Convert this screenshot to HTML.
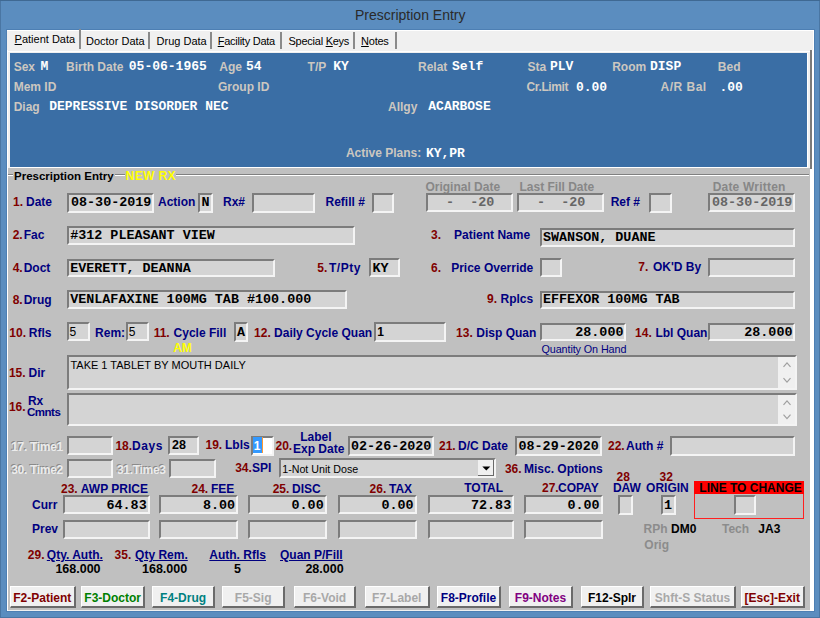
<!DOCTYPE html>
<html><head><meta charset="utf-8">
<style>
*{margin:0;padding:0;box-sizing:border-box}
html,body{width:820px;height:618px;overflow:hidden;background:#5b8dbf;font-family:"Liberation Sans",sans-serif}
.t{position:absolute;white-space:nowrap}
.bx{position:absolute;border-top:2px solid #7c7c7c;border-left:2px solid #7c7c7c;border-bottom:2px solid #f4f4f4;border-right:2px solid #f4f4f4}
.btn{position:absolute;top:586px;height:22px;padding-top:2px;background:#f0f0f0;border-top:1px solid #fff;border-left:1px solid #fff;border-right:2px solid #6a6a6a;border-bottom:2px solid #6a6a6a;font-weight:bold;font-size:12px;text-align:center;line-height:19px;white-space:nowrap}
.f{position:absolute}
</style></head><body>

<div class="f" style="left:0;top:0;width:820px;height:618px;background:#5b8dbf;border:1px solid #4a76a3"></div>
<div class="f" style="left:0;top:0;width:820px;height:1px;background:#3f6993"></div>
<div class="t" style="left:355px;top:6.15px;font-size:14px;line-height:18px;font-weight:normal;color:#2a2a2a;font-family:'Liberation Sans',sans-serif;">Prescription Entry</div>
<div class="f" style="left:6px;top:29px;width:809px;height:583px;background:#4d7fb3"></div>
<div class="f" style="left:7px;top:30px;width:807px;height:581px;background:#f0f0f0;border-top:1px solid #fff;border-right:1px solid #fff"></div>
<div class="f" style="left:810px;top:50px;width:4px;height:561px;background:#fff"></div>
<div class="f" style="left:7px;top:51px;width:803px;height:1px;background:#fff"></div>
<div class="f" style="left:7px;top:50px;width:1px;height:561px;background:#fff"></div>
<div class="f" style="left:810px;top:50px;width:1.5px;height:119px;background:#7a7a7a"></div>
<div class="t" style="left:14.6px;top:32.19px;font-size:11px;line-height:14px;font-weight:normal;color:#000;font-family:'Liberation Sans',sans-serif;"><u>P</u>atient Data</div>
<div class="f" style="left:79.0px;top:29px;width:2px;height:20px;background:#8a8a8a"></div>
<div class="t" style="left:86px;top:33.69px;font-size:11px;line-height:14px;font-weight:normal;color:#000;font-family:'Liberation Sans',sans-serif;">Doctor Data</div>
<div class="f" style="left:148.0px;top:32px;width:2px;height:17px;background:#8a8a8a"></div>
<div class="t" style="left:156.6px;top:33.69px;font-size:11px;line-height:14px;font-weight:normal;color:#000;font-family:'Liberation Sans',sans-serif;">Drug Data</div>
<div class="f" style="left:209.6px;top:32px;width:2px;height:17px;background:#8a8a8a"></div>
<div class="t" style="left:217.7px;top:33.69px;font-size:11px;line-height:14px;font-weight:normal;color:#000;font-family:'Liberation Sans',sans-serif;letter-spacing:-0.25px"><u>F</u>acility Data</div>
<div class="f" style="left:280.0px;top:32px;width:2px;height:17px;background:#8a8a8a"></div>
<div class="t" style="left:288.5px;top:33.69px;font-size:11px;line-height:14px;font-weight:normal;color:#000;font-family:'Liberation Sans',sans-serif;letter-spacing:-0.25px">Special <u>K</u>eys</div>
<div class="f" style="left:353.3px;top:32px;width:2px;height:17px;background:#8a8a8a"></div>
<div class="t" style="left:361.1px;top:33.69px;font-size:11px;line-height:14px;font-weight:normal;color:#000;font-family:'Liberation Sans',sans-serif;letter-spacing:-0.25px"><u>N</u>otes</div>
<div class="f" style="left:395.4px;top:32px;width:2px;height:17px;background:#8a8a8a"></div>
<div class="f" style="left:10px;top:53px;width:798px;height:115px;background:#fff"></div>
<div class="f" style="left:10px;top:53px;width:797px;height:113.5px;background:#3a6ea5"></div>
<div class="t" style="left:13.7px;top:58.84px;font-size:12px;line-height:16px;font-weight:bold;color:#ccc7c0;font-family:'Liberation Sans',sans-serif;">Sex</div>
<div class="t" style="left:40.5px;top:58.44px;font-size:13px;line-height:17px;font-weight:bold;color:#fff;font-family:'Liberation Mono',monospace;white-space:pre;">M</div>
<div class="t" style="left:66px;top:58.84px;font-size:12px;line-height:16px;font-weight:bold;color:#ccc7c0;font-family:'Liberation Sans',sans-serif;">Birth Date</div>
<div class="t" style="left:128.8px;top:58.44px;font-size:13px;line-height:17px;font-weight:bold;color:#fff;font-family:'Liberation Mono',monospace;white-space:pre;">05-06-1965</div>
<div class="t" style="left:219.3px;top:58.84px;font-size:12px;line-height:16px;font-weight:bold;color:#ccc7c0;font-family:'Liberation Sans',sans-serif;">Age</div>
<div class="t" style="left:246px;top:58.44px;font-size:13px;line-height:17px;font-weight:bold;color:#fff;font-family:'Liberation Mono',monospace;white-space:pre;">54</div>
<div class="t" style="left:307.6px;top:58.84px;font-size:12px;line-height:16px;font-weight:bold;color:#ccc7c0;font-family:'Liberation Sans',sans-serif;">T/P</div>
<div class="t" style="left:333.2px;top:58.44px;font-size:13px;line-height:17px;font-weight:bold;color:#fff;font-family:'Liberation Mono',monospace;white-space:pre;">KY</div>
<div class="t" style="left:418px;top:58.84px;font-size:12px;line-height:16px;font-weight:bold;color:#ccc7c0;font-family:'Liberation Sans',sans-serif;">Relat</div>
<div class="t" style="left:452px;top:58.44px;font-size:13px;line-height:17px;font-weight:bold;color:#fff;font-family:'Liberation Mono',monospace;white-space:pre;">Self</div>
<div class="t" style="left:527.6px;top:58.84px;font-size:12px;line-height:16px;font-weight:bold;color:#ccc7c0;font-family:'Liberation Sans',sans-serif;">Sta</div>
<div class="t" style="left:550px;top:58.44px;font-size:13px;line-height:17px;font-weight:bold;color:#fff;font-family:'Liberation Mono',monospace;white-space:pre;">PLV</div>
<div class="t" style="left:612.2px;top:58.84px;font-size:12px;line-height:16px;font-weight:bold;color:#ccc7c0;font-family:'Liberation Sans',sans-serif;">Room</div>
<div class="t" style="left:650px;top:58.44px;font-size:13px;line-height:17px;font-weight:bold;color:#fff;font-family:'Liberation Mono',monospace;white-space:pre;">DISP</div>
<div class="t" style="left:717.8px;top:58.84px;font-size:12px;line-height:16px;font-weight:bold;color:#ccc7c0;font-family:'Liberation Sans',sans-serif;">Bed</div>
<div class="t" style="left:13.7px;top:79.44px;font-size:12px;line-height:16px;font-weight:bold;color:#ccc7c0;font-family:'Liberation Sans',sans-serif;">Mem ID</div>
<div class="t" style="left:218px;top:79.44px;font-size:12px;line-height:16px;font-weight:bold;color:#ccc7c0;font-family:'Liberation Sans',sans-serif;">Group ID</div>
<div class="t" style="left:526.6px;top:79.44px;font-size:12px;line-height:16px;font-weight:bold;color:#ccc7c0;font-family:'Liberation Sans',sans-serif;letter-spacing:-0.4px">Cr.Limit</div>
<div class="t" style="left:575.9px;top:79.04px;font-size:13px;line-height:17px;font-weight:bold;color:#fff;font-family:'Liberation Mono',monospace;white-space:pre;">0.00</div>
<div class="t" style="left:660.5px;top:79.44px;font-size:12px;line-height:16px;font-weight:bold;color:#ccc7c0;font-family:'Liberation Sans',sans-serif;letter-spacing:0.5px">A/R Bal</div>
<div class="t" style="left:719.5px;top:79.04px;font-size:13px;line-height:17px;font-weight:bold;color:#fff;font-family:'Liberation Mono',monospace;white-space:pre;">.00</div>
<div class="t" style="left:13.7px;top:98.84px;font-size:12px;line-height:16px;font-weight:bold;color:#ccc7c0;font-family:'Liberation Sans',sans-serif;">Diag</div>
<div class="t" style="left:49.2px;top:98.44px;font-size:13px;line-height:17px;font-weight:bold;color:#fff;font-family:'Liberation Mono',monospace;white-space:pre;">DEPRESSIVE DISORDER NEC</div>
<div class="t" style="left:388px;top:98.84px;font-size:12px;line-height:16px;font-weight:bold;color:#ccc7c0;font-family:'Liberation Sans',sans-serif;">Allgy</div>
<div class="t" style="left:428.3px;top:98.44px;font-size:13px;line-height:17px;font-weight:bold;color:#fff;font-family:'Liberation Mono',monospace;white-space:pre;">ACARBOSE</div>
<div class="t" style="left:345.9px;top:145.24px;font-size:12px;line-height:16px;font-weight:bold;color:#ccc7c0;font-family:'Liberation Sans',sans-serif;">Active Plans:</div>
<div class="t" style="left:425.9px;top:144.84px;font-size:13px;line-height:17px;font-weight:bold;color:#fff;font-family:'Liberation Mono',monospace;white-space:pre;">KY,PR</div>
<div class="f" style="left:8px;top:168px;width:802px;height:442px;background:#c0c0c0"></div>
<div class="f" style="left:8px;top:174px;width:801px;height:1px;background:#808080"></div>
<div class="f" style="left:8px;top:175px;width:801px;height:1.2px;background:#fff"></div>
<div class="f" style="left:12.5px;top:169px;width:102.5px;height:12px;background:#c0c0c0"></div>
<div class="f" style="left:125px;top:169px;width:51px;height:12px;background:#c0c0c0"></div>
<div class="t" style="left:14px;top:168.51px;font-size:11.5px;line-height:15px;font-weight:bold;color:#000;font-family:'Liberation Sans',sans-serif;">Prescription Entry</div>
<div class="t" style="left:125.6px;top:167.64px;font-size:12px;line-height:16px;font-weight:bold;color:#ffff00;font-family:'Liberation Sans',sans-serif;letter-spacing:0.4px">NEW RX</div>
<div class="t" style="left:13px;top:194.34px;font-size:12px;line-height:16px;font-weight:bold;color:#800000;font-family:'Liberation Sans',sans-serif;">1.</div>
<div class="t" style="left:26px;top:194.34px;font-size:12px;line-height:16px;font-weight:bold;color:#000080;font-family:'Liberation Sans',sans-serif;">Date</div>
<div class="bx" style="left:67px;top:193px;width:87px;height:19.5px;background:#d4d4d4;"></div>
<div class="t" style="left:71px;top:194.43px;font-size:13.4px;line-height:17px;font-weight:bold;color:#000;font-family:'Liberation Mono',monospace;white-space:pre;">08-30-2019</div>
<div class="t" style="left:158px;top:194.34px;font-size:12px;line-height:16px;font-weight:bold;color:#000080;font-family:'Liberation Sans',sans-serif;">Action</div>
<div class="bx" style="left:198px;top:193px;width:14.5px;height:19.5px;background:#d4d4d4;"></div>
<div class="t" style="left:201.5px;top:194.43px;font-size:13.4px;line-height:17px;font-weight:bold;color:#000;font-family:'Liberation Mono',monospace;white-space:pre;">N</div>
<div class="t" style="left:223px;top:194.34px;font-size:12px;line-height:16px;font-weight:bold;color:#000080;font-family:'Liberation Sans',sans-serif;">Rx#</div>
<div class="bx" style="left:251.6px;top:193px;width:63.400000000000006px;height:19.5px;background:#d4d4d4;"></div>
<div class="t" style="left:325.5px;top:194.34px;font-size:12px;line-height:16px;font-weight:bold;color:#000080;font-family:'Liberation Sans',sans-serif;">Refill #</div>
<div class="bx" style="left:371.6px;top:193px;width:22.399999999999977px;height:19.5px;background:#d4d4d4;"></div>
<div class="t" style="left:425.4px;top:179.34px;font-size:12px;line-height:16px;font-weight:bold;color:#878787;font-family:'Liberation Sans',sans-serif;">Original Date</div>
<div class="bx" style="left:426px;top:193px;width:87.39999999999998px;height:19px;background:#d4d4d4;"></div>
<div class="t" style="left:430px;top:194.43px;font-size:13.4px;line-height:17px;font-weight:bold;color:#666;font-family:'Liberation Mono',monospace;white-space:pre;">  -  -20</div>
<div class="t" style="left:519.5px;top:179.34px;font-size:12px;line-height:16px;font-weight:bold;color:#878787;font-family:'Liberation Sans',sans-serif;">Last Fill Date</div>
<div class="bx" style="left:517px;top:193px;width:87px;height:19px;background:#d4d4d4;"></div>
<div class="t" style="left:521px;top:194.43px;font-size:13.4px;line-height:17px;font-weight:bold;color:#666;font-family:'Liberation Mono',monospace;white-space:pre;">  -  -20</div>
<div class="t" style="left:610.7px;top:194.34px;font-size:12px;line-height:16px;font-weight:bold;color:#000080;font-family:'Liberation Sans',sans-serif;">Ref #</div>
<div class="bx" style="left:648.8px;top:193px;width:23.200000000000045px;height:19.5px;background:#d4d4d4;"></div>
<div class="t" style="left:712.7px;top:179.14px;font-size:12px;line-height:16px;font-weight:bold;color:#878787;font-family:'Liberation Sans',sans-serif;letter-spacing:0.2px">Date Written</div>
<div class="bx" style="left:708px;top:193px;width:87.29999999999995px;height:19px;background:#d4d4d4;"></div>
<div class="t" style="left:712px;top:194.43px;font-size:13.4px;line-height:17px;font-weight:bold;color:#666;font-family:'Liberation Mono',monospace;white-space:pre;">08-30-2019</div>
<div class="t" style="left:12.7px;top:226.84px;font-size:12px;line-height:16px;font-weight:bold;color:#000080;font-family:'Liberation Sans',sans-serif;"><span style="color:#800000">2.</span><span style="margin-left:1px">Fac</span></div>
<div class="bx" style="left:66.5px;top:226px;width:288.5px;height:18.5px;background:#d4d4d4;"></div>
<div class="t" style="left:70.2px;top:226.93px;font-size:13.4px;line-height:17px;font-weight:bold;color:#000;font-family:'Liberation Mono',monospace;white-space:pre;">#312 PLEASANT VIEW</div>
<div class="t" style="left:431px;top:226.84px;font-size:12px;line-height:16px;font-weight:bold;color:#800000;font-family:'Liberation Sans',sans-serif;">3.</div>
<div class="t" style="left:454.1px;top:226.84px;font-size:12px;line-height:16px;font-weight:bold;color:#000080;font-family:'Liberation Sans',sans-serif;">Patient Name</div>
<div class="bx" style="left:539.5px;top:228.4px;width:255.70000000000005px;height:18.299999999999983px;background:#d4d4d4;"></div>
<div class="t" style="left:543px;top:229.43px;font-size:13.4px;line-height:17px;font-weight:bold;color:#000;font-family:'Liberation Mono',monospace;white-space:pre;">SWANSON, DUANE</div>
<div class="t" style="left:12.7px;top:259.54px;font-size:12px;line-height:16px;font-weight:bold;color:#000080;font-family:'Liberation Sans',sans-serif;"><span style="color:#800000">4.</span><span style="margin-left:1px">Doct</span></div>
<div class="bx" style="left:66.5px;top:258.5px;width:208.10000000000002px;height:18.80000000000001px;background:#d4d4d4;"></div>
<div class="t" style="left:70.2px;top:259.63px;font-size:13.4px;line-height:17px;font-weight:bold;color:#000;font-family:'Liberation Mono',monospace;white-space:pre;">EVERETT, DEANNA</div>
<div class="t" style="left:317.3px;top:259.54px;font-size:12px;line-height:16px;font-weight:bold;color:#800000;font-family:'Liberation Sans',sans-serif;">5.</div>
<div class="t" style="left:329px;top:259.54px;font-size:12px;line-height:16px;font-weight:bold;color:#000080;font-family:'Liberation Sans',sans-serif;letter-spacing:0.5px">T/Pty</div>
<div class="bx" style="left:369px;top:258.1px;width:31.19999999999999px;height:19.299999999999955px;background:#d4d4d4;"></div>
<div class="t" style="left:372.5px;top:259.63px;font-size:13.4px;line-height:17px;font-weight:bold;color:#000;font-family:'Liberation Mono',monospace;white-space:pre;">KY</div>
<div class="t" style="left:431px;top:260.04px;font-size:12px;line-height:16px;font-weight:bold;color:#800000;font-family:'Liberation Sans',sans-serif;">6.</div>
<div class="t" style="left:451.2px;top:260.04px;font-size:12px;line-height:16px;font-weight:bold;color:#000080;font-family:'Liberation Sans',sans-serif;">Price Override</div>
<div class="bx" style="left:539.5px;top:258.4px;width:22.5px;height:18.80000000000001px;background:#d4d4d4;"></div>
<div class="t" style="left:638.3px;top:259.44px;font-size:12px;line-height:16px;font-weight:bold;color:#800000;font-family:'Liberation Sans',sans-serif;">7.</div>
<div class="t" style="left:652.9px;top:259.44px;font-size:12px;line-height:16px;font-weight:bold;color:#000080;font-family:'Liberation Sans',sans-serif;">OK'D By</div>
<div class="bx" style="left:708.3px;top:258.4px;width:86.80000000000007px;height:18.80000000000001px;background:#d4d4d4;"></div>
<div class="t" style="left:12.7px;top:291.54px;font-size:12px;line-height:16px;font-weight:bold;color:#000080;font-family:'Liberation Sans',sans-serif;"><span style="color:#800000">8.</span><span style="margin-left:1px">Drug</span></div>
<div class="bx" style="left:66.5px;top:290.2px;width:280.5px;height:18.80000000000001px;background:#d4d4d4;"></div>
<div class="t" style="left:70.2px;top:291.43px;font-size:13.4px;line-height:17px;font-weight:bold;color:#000;font-family:'Liberation Mono',monospace;white-space:pre;">VENLAFAXINE 100MG TAB #100.000</div>
<div class="t" style="left:487px;top:290.64px;font-size:12px;line-height:16px;font-weight:bold;color:#800000;font-family:'Liberation Sans',sans-serif;">9.</div>
<div class="t" style="left:500.5px;top:290.64px;font-size:12px;line-height:16px;font-weight:bold;color:#000080;font-family:'Liberation Sans',sans-serif;">Rplcs</div>
<div class="bx" style="left:539.5px;top:290.6px;width:255.60000000000002px;height:18.299999999999955px;background:#d4d4d4;"></div>
<div class="t" style="left:543px;top:291.43px;font-size:13.4px;line-height:17px;font-weight:bold;color:#000;font-family:'Liberation Mono',monospace;white-space:pre;">EFFEXOR 100MG TAB</div>
<div class="t" style="left:9.3px;top:324.84px;font-size:12px;line-height:16px;font-weight:bold;color:#800000;font-family:'Liberation Sans',sans-serif;">10.</div>
<div class="t" style="left:28.8px;top:324.84px;font-size:12px;line-height:16px;font-weight:bold;color:#000080;font-family:'Liberation Sans',sans-serif;">Rfls</div>
<div class="bx" style="left:66.5px;top:322.3px;width:23.400000000000006px;height:18.899999999999977px;background:#d4d4d4;"></div>
<div class="t" style="left:69.5px;top:324.14px;font-size:12px;line-height:16px;font-weight:normal;color:#000;font-family:'Liberation Sans',sans-serif;">5</div>
<div class="t" style="left:95.1px;top:324.84px;font-size:12px;line-height:16px;font-weight:bold;color:#000080;font-family:'Liberation Sans',sans-serif;">Rem:</div>
<div class="bx" style="left:125.6px;top:322.3px;width:23.200000000000017px;height:18.899999999999977px;background:#d4d4d4;"></div>
<div class="t" style="left:128.8px;top:324.14px;font-size:12px;line-height:16px;font-weight:normal;color:#000;font-family:'Liberation Sans',sans-serif;">5</div>
<div class="t" style="left:153.7px;top:324.84px;font-size:12px;line-height:16px;font-weight:bold;color:#800000;font-family:'Liberation Sans',sans-serif;">11.</div>
<div class="t" style="left:173.6px;top:324.84px;font-size:12px;line-height:16px;font-weight:bold;color:#000080;font-family:'Liberation Sans',sans-serif;">Cycle Fill</div>
<div class="bx" style="left:233.7px;top:322.4px;width:14.600000000000023px;height:19.5px;background:#d4d4d4;"></div>
<div class="t" style="left:237px;top:323.93px;font-size:13.4px;line-height:17px;font-weight:bold;color:#000;font-family:'Liberation Mono',monospace;white-space:pre;">A</div>
<div class="t" style="left:173.2px;top:339.84px;font-size:12px;line-height:16px;font-weight:bold;color:#ffff00;font-family:'Liberation Sans',sans-serif;">AM</div>
<div class="t" style="left:254.1px;top:324.84px;font-size:12px;line-height:16px;font-weight:bold;color:#800000;font-family:'Liberation Sans',sans-serif;">12.</div>
<div class="t" style="left:274.1px;top:324.84px;font-size:12px;line-height:16px;font-weight:bold;color:#000080;font-family:'Liberation Sans',sans-serif;">Daily Cycle Quan</div>
<div class="bx" style="left:374.4px;top:322.4px;width:71.60000000000002px;height:19.5px;background:#d4d4d4;"></div>
<div class="t" style="left:377.3px;top:323.84px;font-size:12px;line-height:16px;font-weight:bold;color:#000;font-family:'Liberation Sans',sans-serif;">1</div>
<div class="t" style="left:456.1px;top:324.84px;font-size:12px;line-height:16px;font-weight:bold;color:#800000;font-family:'Liberation Sans',sans-serif;">13.</div>
<div class="t" style="left:476.3px;top:324.84px;font-size:12px;line-height:16px;font-weight:bold;color:#000080;font-family:'Liberation Sans',sans-serif;">Disp Quan</div>
<div class="bx" style="left:539.8px;top:323px;width:86.30000000000007px;height:18.30000000000001px;background:#d4d4d4;"></div>
<div class="t" style="left:575.26px;top:323.93px;font-size:13.4px;line-height:17px;font-weight:bold;color:#000;font-family:'Liberation Mono',monospace;white-space:pre;">28.000</div>
<div class="t" style="left:541.5px;top:342.26px;font-size:10.8px;line-height:14px;font-weight:normal;color:#000080;font-family:'Liberation Sans',sans-serif;letter-spacing:-0.1px">Quantity On Hand</div>
<div class="t" style="left:635.1px;top:324.84px;font-size:12px;line-height:16px;font-weight:bold;color:#800000;font-family:'Liberation Sans',sans-serif;">14.</div>
<div class="t" style="left:655.4px;top:324.84px;font-size:12px;line-height:16px;font-weight:bold;color:#000080;font-family:'Liberation Sans',sans-serif;">Lbl Quan</div>
<div class="bx" style="left:708.3px;top:323px;width:86.80000000000007px;height:18.30000000000001px;background:#d4d4d4;"></div>
<div class="t" style="left:744.26px;top:323.93px;font-size:13.4px;line-height:17px;font-weight:bold;color:#000;font-family:'Liberation Mono',monospace;white-space:pre;">28.000</div>
<div class="t" style="left:8.9px;top:364.54px;font-size:12px;line-height:16px;font-weight:bold;color:#800000;font-family:'Liberation Sans',sans-serif;">15.</div>
<div class="t" style="left:28.5px;top:364.54px;font-size:12px;line-height:16px;font-weight:bold;color:#000080;font-family:'Liberation Sans',sans-serif;">Dir</div>
<div class="bx" style="left:66.6px;top:354.5px;width:730.0px;height:35.10000000000002px;background:#d4d4d4;"></div>
<div class="f" style="left:778px;top:356.5px;width:17px;height:31px;background:#f0f0f0"></div>
<div class="t" style="left:70.4px;top:357.99px;font-size:11px;line-height:14px;font-weight:normal;color:#000;font-family:'Liberation Sans',sans-serif;">TAKE 1 TABLET BY MOUTH DAILY</div>
<div class="t" style="left:8.9px;top:399.44px;font-size:12px;line-height:16px;font-weight:bold;color:#800000;font-family:'Liberation Sans',sans-serif;">16.</div>
<div class="t" style="left:27.9px;top:392.84px;font-size:12px;line-height:16px;font-weight:bold;color:#000080;font-family:'Liberation Sans',sans-serif;">Rx</div>
<div class="t" style="left:27px;top:405.31px;font-size:11.5px;line-height:15px;font-weight:bold;color:#000080;font-family:'Liberation Sans',sans-serif;letter-spacing:-0.5px">Cmnts</div>
<div class="bx" style="left:66.6px;top:392.6px;width:730.0px;height:33.19999999999999px;background:#d4d4d4;"></div>
<div class="f" style="left:778px;top:394.6px;width:17px;height:29px;background:#f0f0f0"></div>
<svg class="f" style="left:0;top:0" width="820" height="618"><path d="M783.5,366.8 L787,362.8 L790.5,366.8 M783.5,378.1 L787,382.1 L790.5,378.1 M783.5,404.8 L787,400.8 L790.5,404.8 M783.5,414.7 L787,418.7 L790.5,414.7" stroke="#a0a0a0" stroke-width="1.2" fill="none"/></svg>
<div class="t" style="left:10.2px;top:438.34px;font-size:12px;line-height:16px;font-weight:bold;color:#8a8a8a;font-family:'Liberation Sans',sans-serif;letter-spacing:-0.3px">17. Time1</div>
<div class="t" style="left:11.2px;top:438.84px;font-size:12px;line-height:16px;font-weight:bold;color:#ececec;font-family:'Liberation Sans',sans-serif;letter-spacing:-0.3px">17. Time1</div>
<div class="bx" style="left:66.5px;top:435.7px;width:46.2px;height:19.30000000000001px;background:#d4d4d4;"></div>
<div class="t" style="left:115.4px;top:437.84px;font-size:12px;line-height:16px;font-weight:bold;color:#800000;font-family:'Liberation Sans',sans-serif;">18.</div>
<div class="t" style="left:132px;top:437.84px;font-size:12px;line-height:16px;font-weight:bold;color:#000080;font-family:'Liberation Sans',sans-serif;letter-spacing:0.6px">Days</div>
<div class="bx" style="left:167.7px;top:435.7px;width:31.400000000000006px;height:19.30000000000001px;background:#d4d4d4;"></div>
<div class="t" style="left:172px;top:437.17px;font-size:12.5px;line-height:16px;font-weight:bold;color:#000;font-family:'Liberation Sans',sans-serif;">28</div>
<div class="t" style="left:205.5px;top:437.34px;font-size:12px;line-height:16px;font-weight:bold;color:#800000;font-family:'Liberation Sans',sans-serif;">19.</div>
<div class="t" style="left:225px;top:437.34px;font-size:12px;line-height:16px;font-weight:bold;color:#000080;font-family:'Liberation Sans',sans-serif;">Lbls</div>
<div class="bx" style="left:251px;top:435.8px;width:22.899999999999977px;height:19.899999999999977px;background:#fff;"></div>
<div class="f" style="left:253px;top:437.3px;width:8.7px;height:15.5px;background:#3399ff"></div>
<div class="f" style="left:261.7px;top:437.3px;width:1.3px;height:15.5px;background:#ff9933"></div>
<div class="t" style="left:253.8px;top:437.64px;font-size:12px;line-height:16px;font-weight:bold;color:#fff;font-family:'Liberation Sans',sans-serif;">1</div>
<div class="t" style="left:275.5px;top:438.34px;font-size:12px;line-height:16px;font-weight:bold;color:#800000;font-family:'Liberation Sans',sans-serif;">20.</div>
<div class="t" style="left:300.2px;top:429.44px;font-size:12px;line-height:16px;font-weight:bold;color:#000080;font-family:'Liberation Sans',sans-serif;">Label</div>
<div class="t" style="left:293px;top:441.04px;font-size:12px;line-height:16px;font-weight:bold;color:#000080;font-family:'Liberation Sans',sans-serif;">Exp Date</div>
<div class="bx" style="left:347.5px;top:436.3px;width:86.39999999999998px;height:19.399999999999977px;background:#d4d4d4;"></div>
<div class="t" style="left:351px;top:437.73px;font-size:13.4px;line-height:17px;font-weight:bold;color:#000;font-family:'Liberation Mono',monospace;white-space:pre;">02-26-2020</div>
<div class="t" style="left:439px;top:438.34px;font-size:12px;line-height:16px;font-weight:bold;color:#800000;font-family:'Liberation Sans',sans-serif;">21.</div>
<div class="t" style="left:458px;top:438.34px;font-size:12px;line-height:16px;font-weight:bold;color:#000080;font-family:'Liberation Sans',sans-serif;">D/C Date</div>
<div class="bx" style="left:514.7px;top:436.3px;width:87.39999999999998px;height:19.399999999999977px;background:#d4d4d4;"></div>
<div class="t" style="left:518.5px;top:437.73px;font-size:13.4px;line-height:17px;font-weight:bold;color:#000;font-family:'Liberation Mono',monospace;white-space:pre;">08-29-2020</div>
<div class="t" style="left:608px;top:438.34px;font-size:12px;line-height:16px;font-weight:bold;color:#800000;font-family:'Liberation Sans',sans-serif;">22.</div>
<div class="t" style="left:626px;top:438.34px;font-size:12px;line-height:16px;font-weight:bold;color:#000080;font-family:'Liberation Sans',sans-serif;">Auth #</div>
<div class="bx" style="left:670px;top:436.3px;width:125.10000000000002px;height:19.399999999999977px;background:#d4d4d4;"></div>
<div class="t" style="left:10.2px;top:461.14px;font-size:12px;line-height:16px;font-weight:bold;color:#8a8a8a;font-family:'Liberation Sans',sans-serif;letter-spacing:-0.3px">30. Time2</div>
<div class="t" style="left:11.2px;top:461.64px;font-size:12px;line-height:16px;font-weight:bold;color:#ececec;font-family:'Liberation Sans',sans-serif;letter-spacing:-0.3px">30. Time2</div>
<div class="bx" style="left:66.5px;top:459.3px;width:46.2px;height:18.80000000000001px;background:#d4d4d4;"></div>
<div class="t" style="left:115.9px;top:461.14px;font-size:12px;line-height:16px;font-weight:bold;color:#8a8a8a;font-family:'Liberation Sans',sans-serif;letter-spacing:-0.3px">31.Time3</div>
<div class="t" style="left:116.9px;top:461.64px;font-size:12px;line-height:16px;font-weight:bold;color:#ececec;font-family:'Liberation Sans',sans-serif;letter-spacing:-0.3px">31.Time3</div>
<div class="bx" style="left:168.5px;top:459.3px;width:47.5px;height:18.80000000000001px;background:#d4d4d4;"></div>
<div class="t" style="left:235.2px;top:459.84px;font-size:12px;line-height:16px;font-weight:bold;color:#800000;font-family:'Liberation Sans',sans-serif;">34.</div>
<div class="t" style="left:252px;top:459.84px;font-size:12px;line-height:16px;font-weight:bold;color:#000080;font-family:'Liberation Sans',sans-serif;">SPI</div>
<div class="bx" style="left:278.7px;top:458.3px;width:216.90000000000003px;height:20.0px;background:#d4d4d4;"></div>
<div class="f" style="left:478px;top:460.2px;width:16.1px;height:16.1px;background:#f0f0f0;border-right:1px solid #696969;border-bottom:1px solid #696969"></div>
<svg class="f" style="left:0;top:0" width="820" height="618"><path d="M482.3,466.5 L490.3,466.5 L486.3,470.5 Z" fill="#000"/></svg>
<div class="t" style="left:282.2px;top:462.09px;font-size:10.7px;line-height:14px;font-weight:normal;color:#000;font-family:'Liberation Sans',sans-serif;">1-Not Unit Dose</div>
<div class="t" style="left:504.9px;top:460.64px;font-size:12px;line-height:16px;font-weight:bold;color:#800000;font-family:'Liberation Sans',sans-serif;">36.</div>
<div class="t" style="left:524px;top:460.64px;font-size:12px;line-height:16px;font-weight:bold;color:#000080;font-family:'Liberation Sans',sans-serif;">Misc. Options</div>
<div class="t" style="left:61px;top:480.54px;font-size:12px;line-height:16px;font-weight:bold;color:#800000;font-family:'Liberation Sans',sans-serif;">23.</div>
<div class="t" style="left:80.8px;top:480.54px;font-size:12px;line-height:16px;font-weight:bold;color:#000080;font-family:'Liberation Sans',sans-serif;">AWP PRICE</div>
<div class="t" style="left:191.5px;top:480.54px;font-size:12px;line-height:16px;font-weight:bold;color:#800000;font-family:'Liberation Sans',sans-serif;">24.</div>
<div class="t" style="left:211px;top:480.54px;font-size:12px;line-height:16px;font-weight:bold;color:#000080;font-family:'Liberation Sans',sans-serif;">FEE</div>
<div class="t" style="left:272.7px;top:480.54px;font-size:12px;line-height:16px;font-weight:bold;color:#800000;font-family:'Liberation Sans',sans-serif;">25.</div>
<div class="t" style="left:292px;top:480.54px;font-size:12px;line-height:16px;font-weight:bold;color:#000080;font-family:'Liberation Sans',sans-serif;">DISC</div>
<div class="t" style="left:369.6px;top:480.54px;font-size:12px;line-height:16px;font-weight:bold;color:#800000;font-family:'Liberation Sans',sans-serif;">26.</div>
<div class="t" style="left:389px;top:480.54px;font-size:12px;line-height:16px;font-weight:bold;color:#000080;font-family:'Liberation Sans',sans-serif;">TAX</div>
<div class="t" style="left:464.2px;top:480.24px;font-size:12px;line-height:16px;font-weight:bold;color:#000080;font-family:'Liberation Sans',sans-serif;">TOTAL</div>
<div class="t" style="left:542px;top:480.24px;font-size:12px;line-height:16px;font-weight:bold;color:#800000;font-family:'Liberation Sans',sans-serif;">27.</div>
<div class="t" style="left:558px;top:480.24px;font-size:12px;line-height:16px;font-weight:bold;color:#000080;font-family:'Liberation Sans',sans-serif;">COPAY</div>
<div class="t" style="left:616.6px;top:468.84px;font-size:12px;line-height:16px;font-weight:bold;color:#800000;font-family:'Liberation Sans',sans-serif;">28</div>
<div class="t" style="left:612.9px;top:480.14px;font-size:12px;line-height:16px;font-weight:bold;color:#000080;font-family:'Liberation Sans',sans-serif;">DAW</div>
<div class="t" style="left:659.6px;top:468.84px;font-size:12px;line-height:16px;font-weight:bold;color:#800000;font-family:'Liberation Sans',sans-serif;">32</div>
<div class="t" style="left:646.1px;top:480.14px;font-size:12px;line-height:16px;font-weight:bold;color:#000080;font-family:'Liberation Sans',sans-serif;">ORIGIN</div>
<div class="t" style="left:32px;top:497.14px;font-size:12px;line-height:16px;font-weight:bold;color:#000080;font-family:'Liberation Sans',sans-serif;">Curr</div>
<div class="t" style="left:32px;top:521.34px;font-size:12px;line-height:16px;font-weight:bold;color:#000080;font-family:'Liberation Sans',sans-serif;">Prev</div>
<div class="bx" style="left:62.5px;top:495.4px;width:87.5px;height:19.100000000000023px;background:#d4d4d4;"></div>
<div class="t" style="left:106.5px;top:496.53px;font-size:13.4px;line-height:17px;font-weight:bold;color:#000;font-family:'Liberation Mono',monospace;white-space:pre;">64.83</div>
<div class="bx" style="left:62.5px;top:519.5px;width:87.5px;height:19.5px;background:#d4d4d4;"></div>
<div class="bx" style="left:159.1px;top:495.4px;width:79.30000000000001px;height:19.100000000000023px;background:#d4d4d4;"></div>
<div class="t" style="left:202.94px;top:496.53px;font-size:13.4px;line-height:17px;font-weight:bold;color:#000;font-family:'Liberation Mono',monospace;white-space:pre;">8.00</div>
<div class="bx" style="left:159.1px;top:519.5px;width:79.30000000000001px;height:19.5px;background:#d4d4d4;"></div>
<div class="bx" style="left:247.7px;top:495.4px;width:79.30000000000001px;height:19.100000000000023px;background:#d4d4d4;"></div>
<div class="t" style="left:291.53999999999996px;top:496.53px;font-size:13.4px;line-height:17px;font-weight:bold;color:#000;font-family:'Liberation Mono',monospace;white-space:pre;">0.00</div>
<div class="bx" style="left:247.7px;top:519.5px;width:79.30000000000001px;height:19.5px;background:#d4d4d4;"></div>
<div class="bx" style="left:338.2px;top:495.4px;width:78.69999999999999px;height:19.100000000000023px;background:#d4d4d4;"></div>
<div class="t" style="left:381.43999999999994px;top:496.53px;font-size:13.4px;line-height:17px;font-weight:bold;color:#000;font-family:'Liberation Mono',monospace;white-space:pre;">0.00</div>
<div class="bx" style="left:338.2px;top:519.5px;width:78.69999999999999px;height:19.5px;background:#d4d4d4;"></div>
<div class="bx" style="left:427.6px;top:495.4px;width:86.89999999999998px;height:19.100000000000023px;background:#d4d4d4;"></div>
<div class="t" style="left:471.0px;top:496.53px;font-size:13.4px;line-height:17px;font-weight:bold;color:#000;font-family:'Liberation Mono',monospace;white-space:pre;">72.83</div>
<div class="bx" style="left:427.6px;top:519.5px;width:86.89999999999998px;height:19.5px;background:#d4d4d4;"></div>
<div class="bx" style="left:523.7px;top:495.4px;width:79.19999999999993px;height:19.100000000000023px;background:#d4d4d4;"></div>
<div class="t" style="left:567.44px;top:496.53px;font-size:13.4px;line-height:17px;font-weight:bold;color:#000;font-family:'Liberation Mono',monospace;white-space:pre;">0.00</div>
<div class="bx" style="left:523.7px;top:519.5px;width:79.19999999999993px;height:19.5px;background:#d4d4d4;"></div>
<div class="bx" style="left:618.2px;top:495px;width:15.299999999999955px;height:19.600000000000023px;background:#d4d4d4;"></div>
<div class="bx" style="left:661.2px;top:495px;width:14.5px;height:19.600000000000023px;background:#d4d4d4;"></div>
<div class="t" style="left:664px;top:496.53px;font-size:13.4px;line-height:17px;font-weight:bold;color:#000;font-family:'Liberation Mono',monospace;white-space:pre;">1</div>
<div class="f" style="left:693.9px;top:481.1px;width:110px;height:37.6px;border:1px solid #ff2020"></div>
<div class="f" style="left:693.9px;top:481.1px;width:110px;height:12.6px;background:#ff0000"></div>
<div class="t" style="left:699.3px;top:479.64px;font-size:12px;line-height:16px;font-weight:bold;color:#000;font-family:'Liberation Sans',sans-serif;">LINE TO CHANGE</div>
<div class="bx" style="left:733.6px;top:495px;width:22.600000000000023px;height:19.600000000000023px;background:#d4d4d4;"></div>
<div class="t" style="left:643.5px;top:521.14px;font-size:12px;line-height:16px;font-weight:bold;color:#8c8c8c;font-family:'Liberation Sans',sans-serif;">RPh</div>
<div class="t" style="left:671.1px;top:521.14px;font-size:12px;line-height:16px;font-weight:bold;color:#000;font-family:'Liberation Sans',sans-serif;">DM0</div>
<div class="t" style="left:722px;top:521.14px;font-size:12px;line-height:16px;font-weight:bold;color:#8c8c8c;font-family:'Liberation Sans',sans-serif;">Tech</div>
<div class="t" style="left:758.3px;top:521.14px;font-size:12px;line-height:16px;font-weight:bold;color:#000;font-family:'Liberation Sans',sans-serif;">JA3</div>
<div class="t" style="left:644.3px;top:536.54px;font-size:12px;line-height:16px;font-weight:bold;color:#8c8c8c;font-family:'Liberation Sans',sans-serif;">Orig</div>
<div class="t" style="left:27.8px;top:546.84px;font-size:12px;line-height:16px;font-weight:bold;color:#800000;font-family:'Liberation Sans',sans-serif;">29.</div>
<div class="t" style="left:46.8px;top:546.84px;font-size:12px;line-height:16px;font-weight:bold;color:#000080;font-family:'Liberation Sans',sans-serif;"><u>Qty. Auth.</u></div>
<div class="t" style="left:114.6px;top:546.84px;font-size:12px;line-height:16px;font-weight:bold;color:#800000;font-family:'Liberation Sans',sans-serif;">35.</div>
<div class="t" style="left:135.1px;top:546.84px;font-size:12px;line-height:16px;font-weight:bold;color:#000080;font-family:'Liberation Sans',sans-serif;"><u>Qty Rem.</u></div>
<div class="t" style="left:209.3px;top:546.84px;font-size:12px;line-height:16px;font-weight:bold;color:#000080;font-family:'Liberation Sans',sans-serif;"><u>Auth. Rfls</u></div>
<div class="t" style="left:280px;top:546.84px;font-size:12px;line-height:16px;font-weight:bold;color:#000080;font-family:'Liberation Sans',sans-serif;"><u>Quan P/Fill</u></div>
<div class="t" style="left:55.4px;top:560.57px;font-size:12.5px;line-height:16px;font-weight:bold;color:#000;font-family:'Liberation Sans',sans-serif;">168.000</div>
<div class="t" style="left:142px;top:560.57px;font-size:12.5px;line-height:16px;font-weight:bold;color:#000;font-family:'Liberation Sans',sans-serif;">168.000</div>
<div class="t" style="left:234.1px;top:560.57px;font-size:12.5px;line-height:16px;font-weight:bold;color:#000;font-family:'Liberation Sans',sans-serif;">5</div>
<div class="t" style="left:305.4px;top:560.57px;font-size:12.5px;line-height:16px;font-weight:bold;color:#000;font-family:'Liberation Sans',sans-serif;">28.000</div>
<div class="btn" style="left:10px;width:65.5px;color:#800000">F2-Patient</div>
<div class="btn" style="left:81.4px;width:63.599999999999994px;color:#008000">F3-Doctor</div>
<div class="btn" style="left:151.7px;width:63.80000000000001px;color:#008080">F4-Drug</div>
<div class="btn" style="left:222.3px;width:62.69999999999999px;color:#a8a8a8">F5-Sig</div>
<div class="btn" style="left:293.7px;width:62.80000000000001px;color:#a8a8a8">F6-Void</div>
<div class="btn" style="left:365px;width:64.5px;color:#a8a8a8">F7-Label</div>
<div class="btn" style="left:437px;width:64px;color:#000080">F8-Profile</div>
<div class="btn" style="left:509.3px;width:63.400000000000034px;color:#800080">F9-Notes</div>
<div class="btn" style="left:581px;width:63px;color:#000">F12-Splr</div>
<div class="btn" style="left:649.9px;width:86.30000000000007px;color:#a8a8a8">Shft-S Status</div>
<div class="btn" style="left:740.7px;width:64.09999999999991px;color:#800000">[Esc]-Exit</div>
</body></html>
